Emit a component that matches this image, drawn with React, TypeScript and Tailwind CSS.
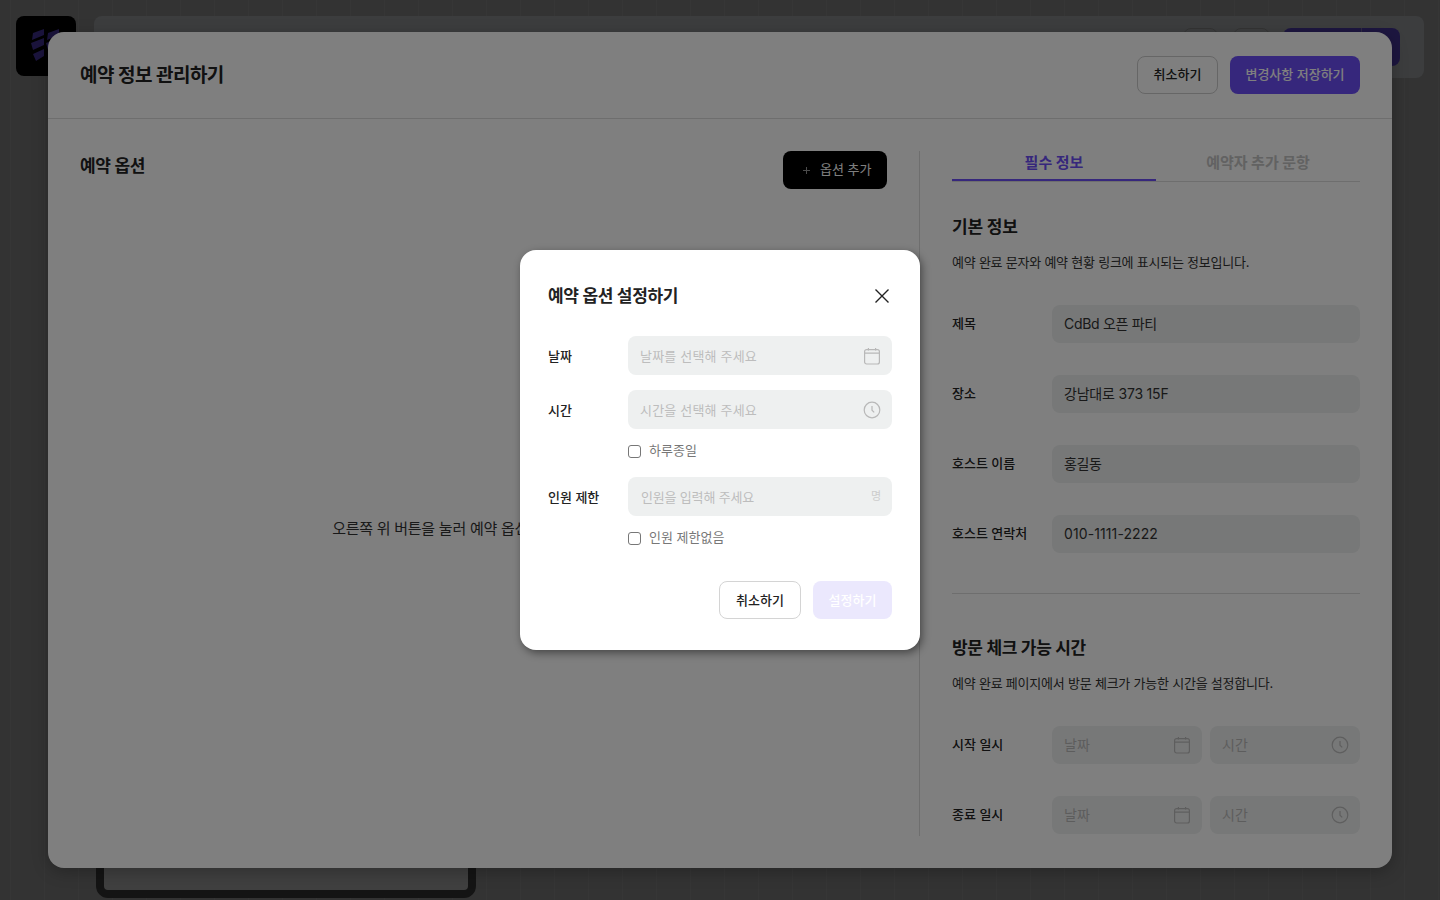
const font = "font-['Inter','Noto_Sans_CJK_KR',sans-serif]";

function CalendarIcon({ className }: { className?: string }) {
  return (
    <svg viewBox="0 0 18 18" fill="none" stroke="currentColor" strokeWidth="1.2" className={className}>
      <rect x="1.6" y="2.6" width="14.8" height="14.4" rx="2" />
      <path d="M1.6 6.2h14.8M5.4 1v2.6M12.6 1v2.6" />
    </svg>
  );
}

function ClockIcon({ className }: { className?: string }) {
  return (
    <svg viewBox="0 0 18 18" fill="none" stroke="currentColor" strokeWidth="1.2" className={className}>
      <circle cx="9" cy="9" r="7.8" />
      <path d="M9 5v4.2l2.2 2.2" />
    </svg>
  );
}

function Field({ label, value, className }: { label: string; value: string; className?: string }) {
  return (
    <div className="flex items-center h-[38px]">
      <div className="w-[100px] text-[13px] font-medium text-[#222]">{label}</div>
      <div className={`flex-1 h-[38px] rounded-lg bg-[#eef0f0] px-3 flex items-center text-sm text-[#333] ${className ?? ""}`}>{value}</div>
    </div>
  );
}

function DateTimeRow({ label }: { label: string }) {
  return (
    <div className="flex items-center h-[38px]">
      <div className="w-[100px] text-[13px] font-medium text-[#222]">{label}</div>
      <div className="flex-1 flex gap-2">
        <div className="flex-1 h-[38px] rounded-lg bg-[#eef0f0] pl-3 pr-[11px] flex items-center justify-between text-sm text-[#bbb]">
          날짜
          <CalendarIcon className="w-[18px] h-[18px] text-[#bdbdbd]" />
        </div>
        <div className="flex-1 h-[38px] rounded-lg bg-[#eef0f0] pl-3 pr-[11px] flex items-center justify-between text-sm text-[#bbb]">
          시간
          <ClockIcon className="w-[18px] h-[18px] text-[#bdbdbd]" />
        </div>
      </div>
    </div>
  );
}

function DialogRow({ label, placeholder, className, children }: { label: string; placeholder: string; className?: string; children: React.ReactNode }) {
  return (
    <div className="flex items-center h-[39px]">
      <div className="w-[80px] pt-[2px] text-[13px] font-medium text-[#222]">{label}</div>
      <div className={`flex-1 h-[39px] rounded-lg bg-[#eef0f0] flex items-center justify-between text-[13px] text-[#bdbdbd] ${className ?? ""}`}>
        <span className="pt-[2px]">{placeholder}</span>
        {children}
      </div>
    </div>
  );
}

function CheckRow({ label }: { label: string }) {
  return (
    <label className="ml-[80px] flex items-center gap-2 h-[20px] text-[13px] text-[#777]">
      <span className="w-[13px] h-[13px] rounded-[3px] border border-[#777] bg-white" />
      {label}
    </label>
  );
}

export default function App() {
  return (
    <div className={`relative h-[900px] overflow-hidden bg-[#cccccc] bg-[linear-gradient(90deg,#d8d8d8_1px,transparent_1px)] bg-[size:34px_100%] bg-[position:10px_0] ${font}`}>
      {/* page behind the dialogs */}
      <div className="flex gap-[18px] pt-4 pl-4 pr-4">
        <div className="w-[60px] h-[60px] rounded-lg bg-black flex items-center justify-center">
          <svg viewBox="0 0 32 34" className="w-8 h-[34px] text-[#6a50f0]" fill="currentColor">
            <path d="M3 4L14 0V6L2 11ZM1 14L14 9V16L3 21ZM3 25L14 20V27L6 32ZM18 4L29 0V6L17 11ZM16 14L29 9V16L18 21ZM18 25L29 20V27L21 32Z" />
          </svg>
        </div>
        <div className="flex-1 h-[62px] rounded-lg bg-[#f0f4f8] flex items-center justify-end pr-6">
          <div className="w-[35px] h-[38px] rounded-lg border border-[#ccc]" />
          <div className="ml-[15px] w-[37px] h-[38px] rounded-lg border border-[#ccc]" />
          <div className="ml-[13px] w-[117px] h-[38px] rounded-lg bg-[#7458ff] flex justify-end">
            <div className="w-[39px] border-l border-[#b9abff]" />
          </div>
        </div>
      </div>
      <div className="ml-[96px] mt-[700px] w-[380px] h-[120px] rounded-xl border-8 border-[#505050] bg-white" />

      <div className="absolute inset-0 bg-black/50" />

      {/* manage reservation dialog */}
      <div className="absolute left-[48px] top-[32px] w-[1344px] h-[836px] rounded-2xl bg-white shadow-[0_4px_16px_rgba(0,0,0,0.25)] overflow-hidden">
        <div className="h-[87px] px-8 flex items-center justify-between border-b border-[#ddd]">
          <h1 className="pt-[2px] text-[19px] font-bold text-[#222] tracking-[-0.5px]">예약 정보 관리하기</h1>
          <div className="flex gap-3">
            <button className="w-[81px] h-[38px] rounded-lg border border-[#ccc] bg-white text-[13px] font-medium text-[#222]">취소하기</button>
            <button className="w-[130px] h-[38px] rounded-lg bg-[#6c4ef8] text-[13px] font-medium text-white">변경사항 저장하기</button>
          </div>
        </div>
        <div className="flex pt-8 px-8">
          <div className="w-[840px] h-[685px] pr-8 border-r border-[#ddd]">
            <div className="flex justify-between items-start">
              <h2 className="pt-[3px] text-[17px] font-bold text-[#222] tracking-[-0.3px]">예약 옵션</h2>
              <button className="w-[104px] h-[38px] pl-5 rounded-lg bg-black flex items-center gap-[10px] text-[13px] text-white">
                <svg viewBox="0 0 7 7" className="w-[7px] h-[7px] text-[#999]" fill="none" stroke="currentColor" strokeWidth="1">
                  <path d="M3.5 0v7M0 3.5h7" />
                </svg>
                옵션 추가
              </button>
            </div>
            <p className="mt-[329px] text-center text-[15px] tracking-[-0.26px] text-[#333]">오른쪽 위 버튼을 눌러 예약 옵션을 추가해 주세요.</p>
          </div>
          <div className="flex-1 pl-8">
            <div className="flex border-b border-[#ddd] -mt-px">
              <div className="flex-1 h-[31px] pt-[2px] -mb-px border-b-2 border-[#6c4ef8] text-center text-[15px] font-bold text-[#6c4ef8]">필수 정보</div>
              <div className="flex-1 h-[31px] pt-[2px] text-center text-[15px] font-bold text-[#c4c4c4]">예약자 추가 문항</div>
            </div>
            <h3 className="mt-[33px] text-[17px] font-bold text-[#222] tracking-[-0.2px]">기본 정보</h3>
            <p className="mt-3 text-[13px] text-[#333] tracking-[-0.23px]">예약 완료 문자와 예약 현황 링크에 표시되는 정보입니다.</p>
            <div className="mt-[33px] flex flex-col gap-8">
              <Field label="제목" value="CdBd 오픈 파티" className="tracking-[-0.3px]" />
              <Field label="장소" value="강남대로 373 15F" className="tracking-[-0.2px]" />
              <Field label="호스트 이름" value="홍길동" className="tracking-[-0.4px]" />
              <Field label="호스트 연락처" value="010-1111-2222" className="tracking-[0.1px]" />
            </div>
            <div className="mt-10 border-t border-[#ddd]" />
            <h3 className="mt-[42px] text-[17px] font-bold text-[#222] tracking-[-0.3px]">방문 체크 가능 시간</h3>
            <p className="mt-3 text-[13px] text-[#333] tracking-[-0.22px]">예약 완료 페이지에서 방문 체크가 가능한 시간을 설정합니다.</p>
            <div className="mt-[33px] flex flex-col gap-8">
              <DateTimeRow label="시작 일시" />
              <DateTimeRow label="종료 일시" />
            </div>
          </div>
        </div>
      </div>

      <div className="absolute inset-0 bg-black/50" />

      {/* option settings dialog */}
      <div className="absolute left-[520px] top-[250px] w-[400px] h-[400px] rounded-2xl bg-white shadow-[2px_3px_8px_rgba(0,0,0,0.45)] px-7 pt-[30px]">
        <div className="flex items-center justify-between h-[32px]">
          <h2 className="pt-[2px] text-[17px] font-bold text-[#222] tracking-[-0.3px]">예약 옵션 설정하기</h2>
          <svg viewBox="0 0 20 20" className="w-5 h-5 text-[#222]" fill="none" stroke="currentColor" strokeWidth="1.4">
            <path d="M3.5 3.5l13 13M16.5 3.5l-13 13" />
          </svg>
        </div>
        <div className="mt-6 flex flex-col">
          <DialogRow label="날짜" placeholder="날짜를 선택해 주세요" className="pl-3 pr-[11px] tracking-[0.18px]">
            <CalendarIcon className="w-[18px] h-[18px] text-[#b8b8b8]" />
          </DialogRow>
          <div className="mt-[15px]">
            <DialogRow label="시간" placeholder="시간을 선택해 주세요" className="pl-3 pr-[11px] tracking-[0.18px]">
              <ClockIcon className="w-[18px] h-[18px] text-[#b8b8b8]" />
            </DialogRow>
          </div>
          <div className="mt-3"><CheckRow label="하루종일" /></div>
          <div className="mt-4">
            <DialogRow label="인원 제한" placeholder="인원을 입력해 주세요" className="pl-[13px] pr-[11px] tracking-[-0.18px]">
              <span className="text-[11px] text-[#ccc]">명</span>
            </DialogRow>
          </div>
          <div className="mt-3"><CheckRow label="인원 제한없음" /></div>
        </div>
        <div className="mt-[33px] flex justify-end gap-3">
          <button className="h-[38px] w-[82px] pt-[2px] rounded-lg border border-[#d4d4d4] bg-white text-[13px] font-medium text-[#222]">취소하기</button>
          <button className="h-[38px] w-[79px] pt-[2px] rounded-lg bg-[#ebe8fd] text-[13px] font-medium text-white">설정하기</button>
        </div>
      </div>
    </div>
  );
}
